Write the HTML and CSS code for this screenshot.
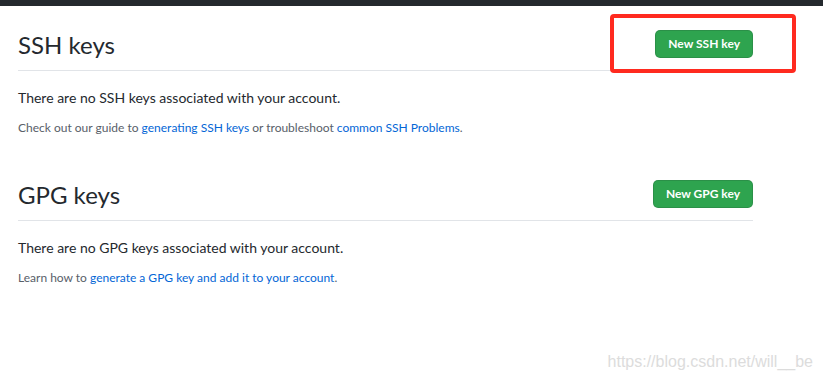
FILE: index.html
```html
<!DOCTYPE html>
<html lang="en">
<head>
    <title>SSH and GPG keys</title>
    <meta charset="utf-8">
    <link rel="stylesheet" href="styles.css">
</head>

<body>
    <div class="topbar"></div>

    <div class="content">
        <!-- SSH -->
        <div class="subhead">
            <h2>SSH keys</h2>
            <div class="action marcado">
                <a href="#" class="btn">New SSH key</a>
            </div>
        </div>
        <p class="blank">There are no SSH keys associated with your account.</p>
        <p class="note">Check out our guide to <a href="#">generating SSH keys</a> or troubleshoot <a href="#">common SSH Problems</a>.</p>

        <!-- GPG -->
        <div class="subhead gpg">
            <h2>GPG keys</h2>
            <div class="action">
                <a href="#" class="btn">New GPG key</a>
            </div>
        </div>
        <p class="blank">There are no GPG keys associated with your account.</p>
        <p class="note">Learn how to <a href="#">generate a GPG key and add it to your account</a>.</p>
    </div>

    <div class="marca">https://blog.csdn.net/will__be</div>
</body>
</html>
```
FILE: styles.css
```css
body {
    margin: 0;
    font-family: "Segoe UI", Lato, sans-serif;
    color: #24292e;
    background: #fff;
}

a {
    color: #0366d6;
    text-decoration: none;
}

.topbar {
    height: 6px;
    background: #24292e;
}

.content {
    width: 735px;
    padding: 0 18px;
}

.subhead {
    display: flex;
    justify-content: space-between;
    align-items: flex-start;
    margin-top: 24px;
    padding-bottom: 10px;
    border-bottom: 1px solid #e1e4e8;
}

.subhead.gpg {
    margin-top: 43px;
}

h2 {
    margin: 0;
    font-size: 24px;
    font-weight: 400;
    line-height: 30px;
}

.action {
    position: relative;
}

/* caixa vermelha em volta do botão */
.marcado::before {
    content: "";
    position: absolute;
    left: -45px;
    right: -43px;
    top: -16px;
    bottom: -15px;
    border: 4px solid #ff2a1f;
    border-radius: 4px;
    background: #fff;
    z-index: 0;
}

.btn {
    position: relative;
    z-index: 1;
    display: block;
    height: 26px;
    line-height: 26px;
    padding: 0 12px;
    font-size: 12px;
    font-weight: 700;
    color: #fff;
    background: #2ea44f;
    border: 1px solid rgba(27, 31, 35, 0.15);
    border-radius: 5px;
}

.blank {
    margin: 16px 0 0;
    font-size: 14px;
    line-height: 21px;
}

.note {
    margin: 11px 0 0;
    font-size: 12px;
    line-height: 18px;
    color: #586069;
}

.marca {
    position: absolute;
    top: 353px;
    right: 10px;
    font-family: "Liberation Sans", Arial, sans-serif;
    font-size: 16px;
    line-height: 18px;
    color: #dcdcdc;
}
```
